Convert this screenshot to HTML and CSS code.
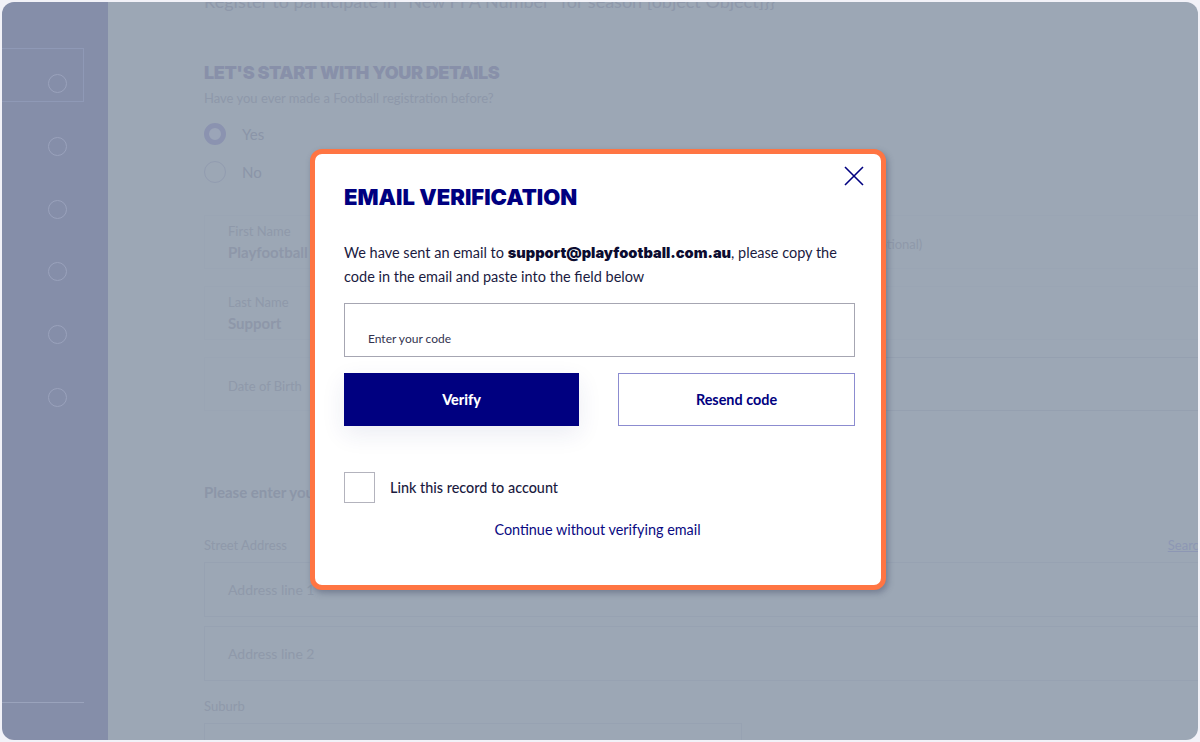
FILE: index.html
```html
<!DOCTYPE html>
<html lang="en">
<head>
<meta charset="utf-8">
<title>Email verification</title>
<link rel="stylesheet" href="styles.css">
</head>
<body>
<div class="frame">
  <aside class="sidebar">
    <div class="step step-active"><span class="dot"></span></div>
    <div class="step"><span class="dot"></span></div>
    <div class="step"><span class="dot"></span></div>
    <div class="step"><span class="dot"></span></div>
    <div class="step"><span class="dot"></span></div>
    <div class="step"><span class="dot"></span></div>
    <div class="side-spacer"></div>
    <div class="side-rule"></div>
  </aside>
  <main class="main">
    <div class="content">
      <p class="season">Register to participate in "New FFA Number" for season [object Object]}}</p>
      <h2 class="sec-title">LET'S START WITH YOUR DETAILS</h2>
      <p class="question">Have you ever made a Football registration before?</p>
      <div class="radio-row"><span class="radio radio-on"></span><span>Yes</span></div>
      <div class="radio-row"><span class="radio"></span><span>No</span></div>
      <div class="fields">
        <div class="col">
          <div class="field"><div class="flabel">First Name</div><div class="fvalue">Playfootball</div></div>
          <div class="field"><div class="flabel">Last Name</div><div class="fvalue">Support</div></div>
          <div class="field field-dob"><div class="flabel">Date of Birth</div></div>
        </div>
        <div class="col">
          <div class="field field-mid"><div class="flabel">Middle Name (optional)</div></div>
          <div class="field"></div>
          <div class="field field-line"></div>
        </div>
      </div>
      <p class="sub">Please enter your address</p>
      <div class="addr-head"><span>Street Address</span><a class="search-link">Search address</a></div>
      <div class="addr-box">Address line 1 *</div>
      <div class="addr-box">Address line 2</div>
      <div class="suburb-label">Suburb</div>
      <div class="suburb-box"></div>
    </div>
  </main>

  <div class="overlay">
    <div class="modal">
      <button class="close" aria-label="Close">
        <svg width="20" height="20" viewBox="0 0 20 20"><path d="M1 1 L19 19 M19 1 L1 19" stroke="#000080" stroke-width="1.6" fill="none"/></svg>
      </button>
      <h1 class="modal-title">EMAIL VERIFICATION</h1>
      <p class="modal-text">We have sent an email to <strong class="email">support@playfootball.com.au</strong>, please copy the code in the email and paste into the field below</p>
      <div class="code-input"><span>Enter your code</span></div>
      <div class="btn-row">
        <button class="btn btn-primary">Verify</button>
        <button class="btn btn-outline">Resend code</button>
      </div>
      <label class="check-row"><span class="checkbox"></span><span>Link this record to account</span></label>
      <a class="continue">Continue without verifying email</a>
    </div>
  </div>
</div>
</body>
</html>
```

FILE: styles.css
```css
* { box-sizing: border-box; }
html, body { margin: 0; padding: 0; }
body {
  background: #f2f2f8;
  font-family: "Lato", "Liberation Sans", sans-serif;
  width: 1200px;
  height: 742px;
  overflow: hidden;
}
.frame {
  position: relative;
  margin: 2px;
  height: 738px;
  border-radius: 12px;
  overflow: hidden;
  display: flex;
}
.sidebar {
  width: 106px;
  flex: none;
  background: #858ea9;
  display: flex;
  flex-direction: column;
  padding-top: 46px;
}
.step {
  width: 82px;
  height: 62.8px;
  display: flex;
  justify-content: flex-end;
  align-items: center;
  padding-right: 17px;
}
.step-active {
  height: 54px;
  border: 1px solid #8f99b6;
  border-left: none;
  align-items: flex-end;
  padding-bottom: 8px;
  padding-right: 16px;
  margin-bottom: 13px;
}
.dot {
  width: 19px;
  height: 19px;
  border-radius: 50%;
  border: 1.5px solid #9aa2bc;
}
.side-spacer { flex: 1; }
.side-rule {
  width: 82px;
  height: 1px;
  background: #9aa3bc;
  margin-bottom: 37px;
}
.main {
  flex: 1;
  background: #9ca7b5;
  overflow: hidden;
  padding-left: 96px;
  color: #8e98a9;
}
.content { width: 1060px; }
.season {
  margin: -12px 0 0;
  font-size: 18px;
  line-height: 22px;
  color: #8e98aa;
}
.sec-title {
  margin: 50px 0 0;
  font-family: "Inter", sans-serif;
  font-weight: 900;
  font-size: 18px;
  line-height: 22px;
  letter-spacing: -0.4px;
  color: #8890a9;
}
.question {
  margin: 5px 0 8px;
  font-size: 13px;
  line-height: 18px;
  color: #8e98aa;
}
.radio-row {
  display: flex;
  align-items: center;
  gap: 16px;
  height: 38px;
  font-size: 15px;
  color: #8b95a8;
}
.radio {
  width: 22px;
  height: 22px;
  border-radius: 50%;
  border: 1px solid #929cb0;
}
.radio-on {
  border: 5px solid #8b93b0;
  background: #9ba5b8;
}
.fields {
  display: grid;
  grid-template-columns: 540px 500px;
  column-gap: 21px;
  margin-top: 24px;
}
.col { display: flex; flex-direction: column; gap: 17px; }
.field {
  height: 54px;
  border: 1px solid #9aa5b4;
  padding: 7px 23px 0;
}
.field-mid { padding-top: 20px; }
.field-line {
  border-left: none;
  border-right: none;
  border-color: #95a0b0;
}
.field-dob { padding-top: 20px; }
.flabel {
  font-size: 13px;
  line-height: 16px;
  color: #8f99aa;
}
.fvalue {
  margin-top: 3px;
  font-size: 15px;
  font-weight: 700;
  line-height: 20px;
  color: #8e97a9;
}
.sub {
  margin: 71px 0 0;
  font-size: 15px;
  font-weight: 700;
  line-height: 20px;
  color: #8c96a8;
}
.addr-head {
  display: flex;
  justify-content: space-between;
  margin-top: 35px;
  font-size: 13px;
  line-height: 16px;
  color: #8f99aa;
}
.search-link {
  text-decoration: underline;
  margin-right: 11px;
  color: #8d97b4;
}
.addr-box {
  margin-top: 9px;
  height: 55px;
  border: 1px solid #97a2b2;
  padding: 0 23px;
  display: flex;
  align-items: center;
  font-size: 14px;
  color: #8f99aa;
}
.addr-box + .addr-box { margin-top: 9px; }
.suburb-label {
  margin-top: 17px;
  font-size: 13px;
  line-height: 16px;
  color: #8f99aa;
}
.suburb-box {
  margin-top: 9px;
  width: 538px;
  height: 50px;
  border: 1px solid #97a2b2;
}

/* modal */
.overlay {
  position: absolute;
  inset: 0;
  display: flex;
  justify-content: center;
  align-items: center;
  padding-right: 4px;
  padding-bottom: 4px;
}
.modal {
  position: relative;
  width: 576px;
  border: 5px solid #ff7543;
  border-radius: 12px;
  background: #fff;
  padding: 31px 26px 46px 29px;
  box-shadow: 2px 3px 6px rgba(40, 50, 80, 0.35);
  color: #1b1b3f;
}
.close {
  position: absolute;
  top: 12px;
  right: 17px;
  background: none;
  border: none;
  padding: 0;
  width: 20px;
  height: 20px;
}
.close svg { display: block; }
.modal-title {
  margin: 0;
  font-family: "Inter", sans-serif;
  font-weight: 900;
  font-size: 22px;
  line-height: 24px;
  letter-spacing: 0;
  color: #000080;
}
.modal-text {
  margin: 32px 0 0;
  font-size: 14.5px;
  line-height: 23px;
  color: #1b1b3f;
}
.email {
  font-family: "Inter", sans-serif;
  font-weight: 900;
  font-size: 14.6px;
  letter-spacing: 0;
  color: #0c0c30;
}
.code-input {
  margin-top: 15px;
  height: 54px;
  border: 1px solid #a6a6b2;
  padding: 0 23px 10px;
  display: flex;
  align-items: flex-end;
  font-size: 12px;
  color: #33334f;
}
.btn-row {
  margin-top: 16px;
  display: grid;
  grid-template-columns: 235px 237px;
  justify-content: space-between;
}
.btn {
  height: 53px;
  font-family: "Lato", sans-serif;
  font-size: 14.4px;
  font-weight: 700;
  cursor: pointer;
}
.btn-primary {
  background: #000080;
  color: #fff;
  border: none;
  font-weight: 900;
  box-shadow: 0 8px 24px rgba(30, 40, 120, 0.09);
}
.btn-outline {
  background: #fff;
  color: #000080;
  border: 1px solid #8c8cd0;
}
.check-row {
  margin-top: 46px;
  display: flex;
  align-items: center;
  gap: 15px;
  font-size: 14.4px;
  font-weight: 500;
  color: #1b1b3f;
}
.checkbox {
  width: 31px;
  height: 31px;
  border: 1px solid #b3b3bd;
  flex: none;
}
.continue {
  display: block;
  margin-top: 18px;
  text-align: center;
  font-size: 14.4px;
  line-height: 18px;
  color: #0a0a82;
  padding-right: 4px;
}
```
